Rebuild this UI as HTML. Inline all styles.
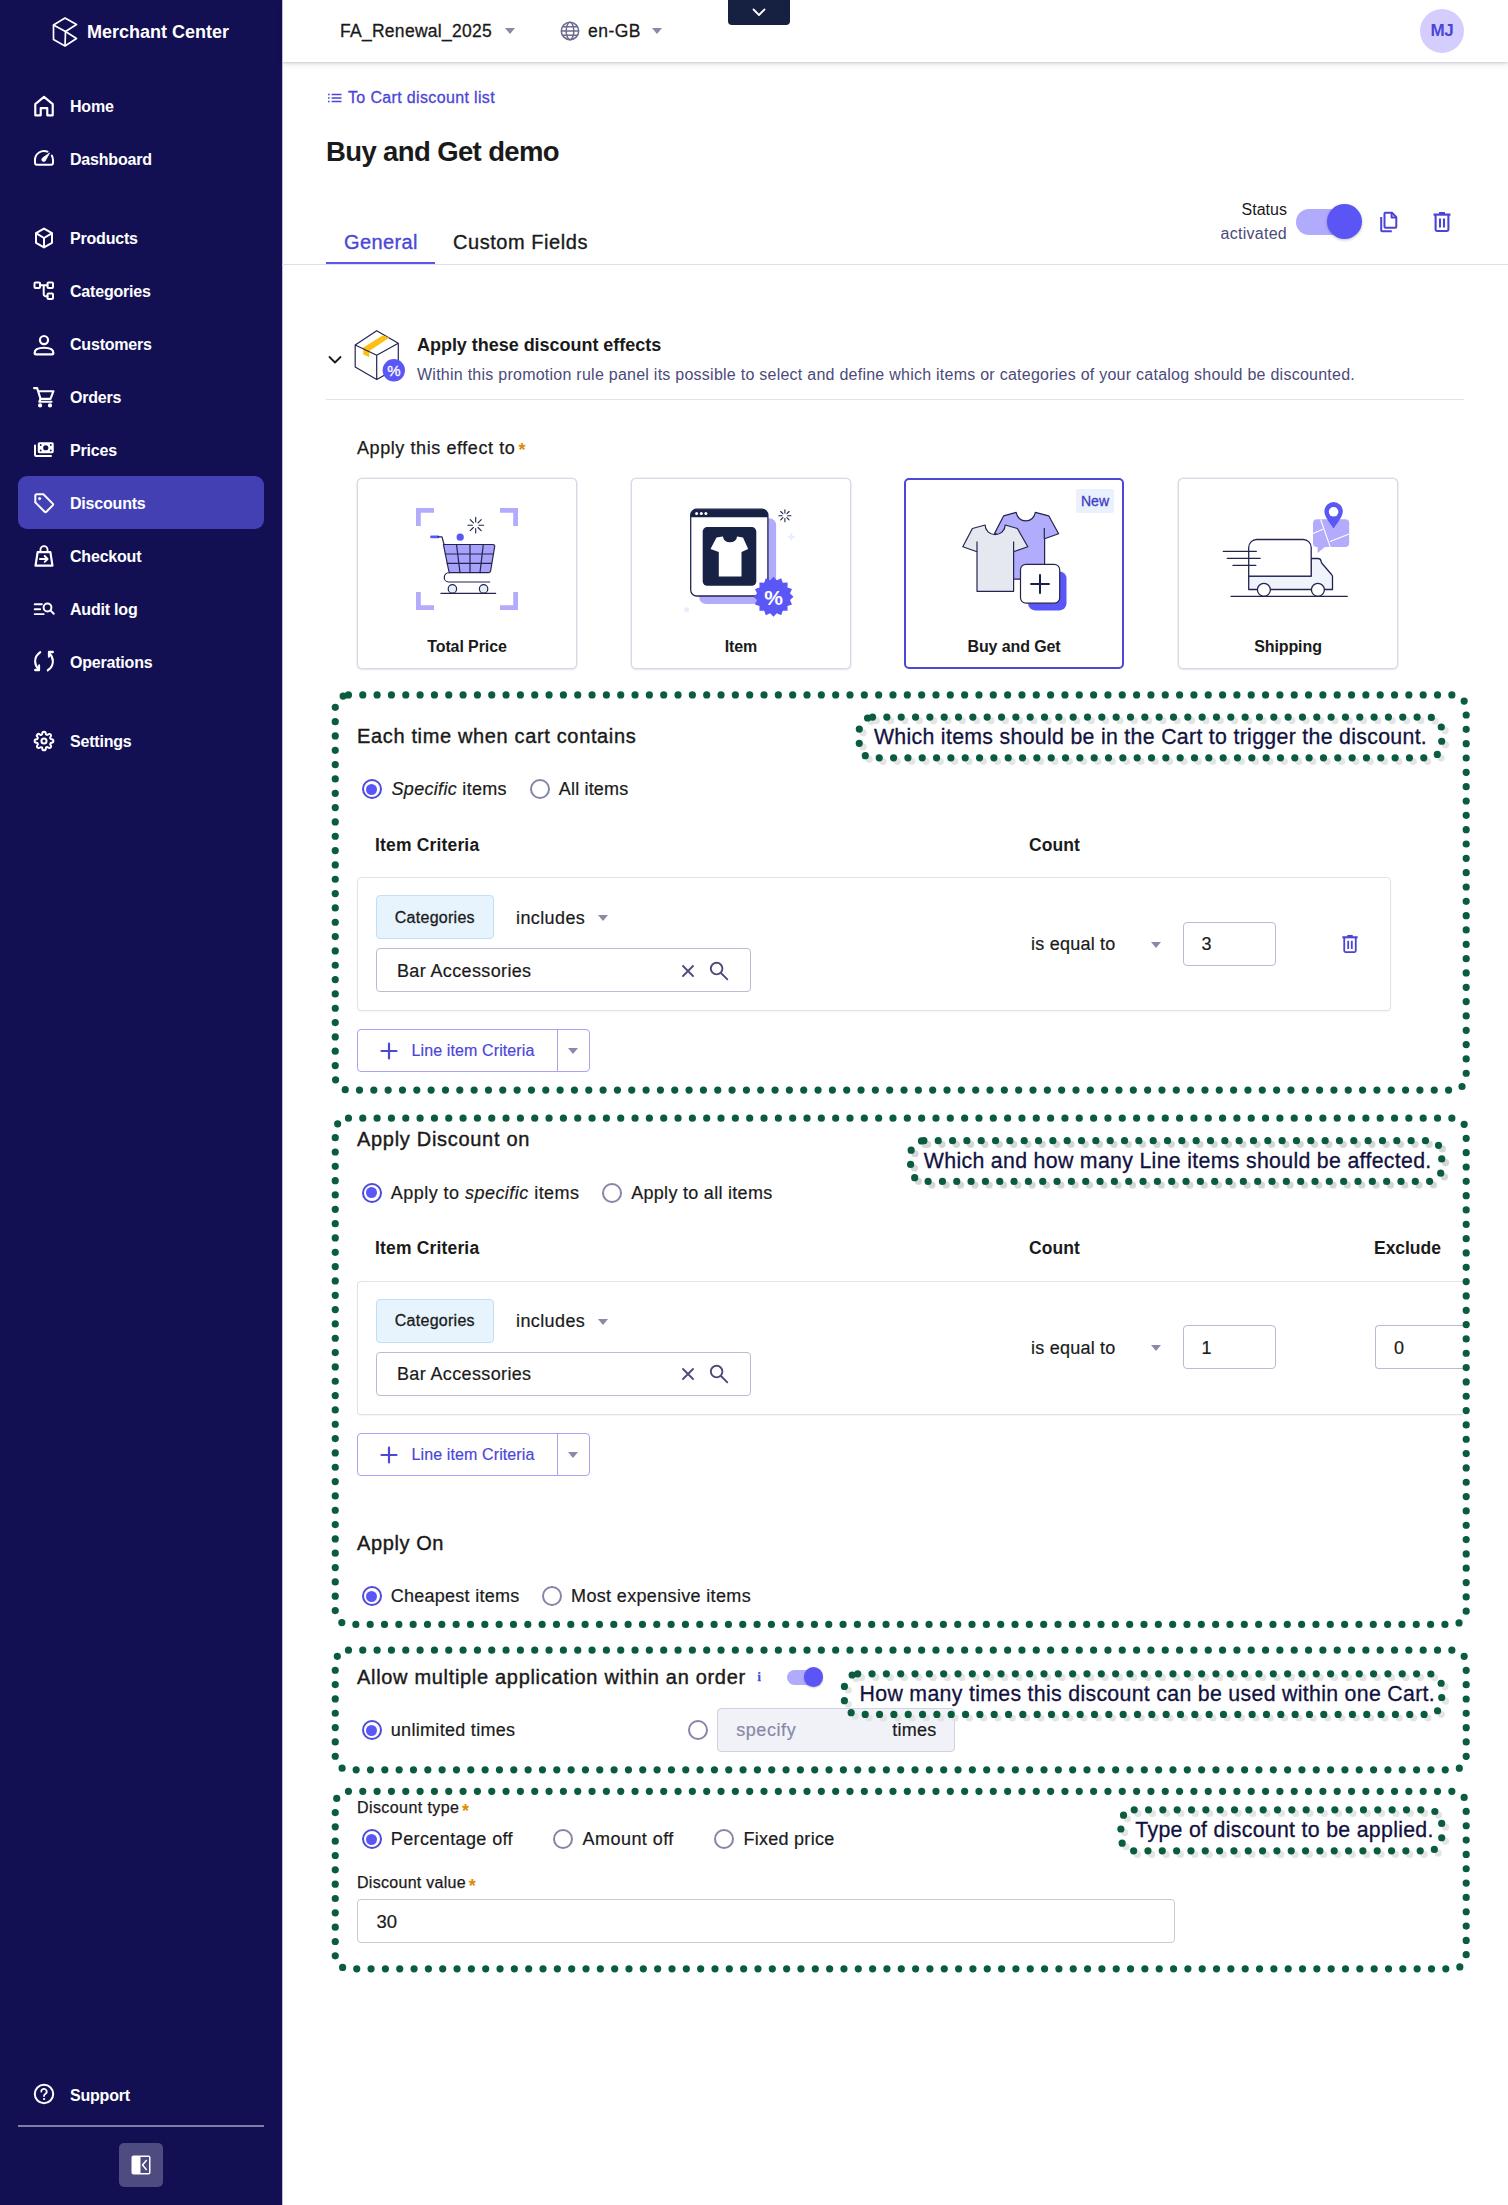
<!DOCTYPE html>
<html lang="en">
<head>
<meta charset="utf-8">
<title>Buy and Get demo - Merchant Center</title>
<style>
*{box-sizing:border-box;margin:0;padding:0}
html,body{width:1508px;height:2205px;overflow:hidden;background:#fff}
body{position:relative;font-family:"Liberation Sans",Arial,sans-serif;color:#1a1a1a;font-size:16px}
.a{position:absolute}
.t{position:absolute;white-space:nowrap;line-height:24px;height:24px}
.b{font-weight:700}
svg{display:block;overflow:visible}
/* sidebar */
#side{position:absolute;left:0;top:0;width:282px;height:2205px;background:#120f52}
#side .nv{position:absolute;left:70px;color:#fff;font-weight:700;font-size:16px;letter-spacing:-.2px;line-height:24px;height:24px;white-space:nowrap}
#side .ic{position:absolute;left:32px;width:24px;height:24px}
#side .ic svg{width:24px;height:24px;fill:none;stroke:#fff;stroke-width:2;stroke-linecap:round;stroke-linejoin:round}
#act{position:absolute;left:18px;top:476.300px;width:246px;height:53px;border-radius:9px;background:#4340b4}
/* header */
#hdr{position:absolute;left:282px;top:0;width:1226px;height:62px;background:#fff;box-shadow:0 1px 2px rgba(30,30,70,.16),0 3px 6px rgba(30,30,70,.09)}

.caret{position:absolute;width:0;height:0;border-left:5.5px solid transparent;border-right:5.5px solid transparent;border-top:6px solid #8a89a8}
.lnk{color:#4b46d8}
.sub{color:#4c4a7a}
.ast{color:#e08a00}
/* cards */
.card{position:absolute;top:478px;width:220px;height:191px;border:1px solid #d7d9e5;border-radius:5px;background:#fff;box-shadow:0 0 0 .5px #e3e5ee,0 1px 2px rgba(50,60,100,.13)}
.card.sel{border:2px solid #4b48d8;box-shadow:none}
.card .lb{position:absolute;left:0;right:0;top:156px;text-align:center;font-weight:700;font-size:16px;line-height:24px;letter-spacing:-.1px}
.card.sel .lb{top:155px}
/* radios */
.rd{position:absolute;width:20px;height:20px;border-radius:50%;border:2px solid #8685a8;background:#fff}
.rd.on{border-color:#4f4ad9}
.rd.on::after{content:"";position:absolute;left:2.500px;top:2.500px;width:11px;height:11px;border-radius:50%;background:#5b57f6}
.inp{position:absolute;border:1px solid #babbd2;border-radius:4px;background:#fff}
.box{position:absolute;border:1px solid #e1e2ec;border-radius:4px;background:#fff;box-shadow:0 1px 2px rgba(60,60,100,.06)}
.chip{position:absolute;border:1px solid #bfe0f7;border-radius:4px;background:#e7f3fd}
.btn{position:absolute;border:1px solid #a8a4f3;border-radius:4px;background:#fff}

.h2{font-size:20px;-webkit-text-stroke:.4px #1a1a1a}
.r17{font-size:18px;-webkit-text-stroke:.2px currentColor}
.ttl17{font-size:17.5px;font-weight:700}
.note{position:absolute;white-space:nowrap;font-size:21.3px;line-height:28px;height:28px;color:#12123f;-webkit-text-stroke:.3px #12123f}
</style>
</head>
<body>

<!-- ============ SIDEBAR ============ -->
<div id="side">
  <div class="a" id="logo" style="left:51px;top:16px;width:28px;height:32px">
    <svg viewBox="0 0 28 32" width="28" height="32" fill="none" stroke="#fff" stroke-width="1.7" stroke-linejoin="round"><path d="M14 2 L25.5 8.5 L14.5 15.5 L25.5 22.5 L14 30 L2.5 23.5 L2.5 9 Z"/><path d="M2.5 9 L14.5 15.5 L14 30"/></svg>
  </div>
  <div class="t b" id="mc" style="left:87px;top:20px;color:#fff;font-size:18px">Merchant Center</div>

  <div id="act"></div>

  <div class="ic" style="top:93.9px"><svg viewBox="0 0 24 24"><g transform="translate(12 12) scale(1.09) translate(-12 -12)"><path d="M4 20.6V10.2L12 3.6l8 6.6v10.4h-5V14H9v6.6z"/></g></svg></div><div class="nv" style="top:95px">Home</div>
  <div class="ic" style="top:146.3px"><svg viewBox="0 0 24 24"><path d="M15.5 5.7A9 9 0 0 0 3 14v2.8a2 2 0 0 0 2 2h14a2 2 0 0 0 2-2V14a9 9 0 0 0-1.2-4.5"/><path d="M17.400 7.300l-3.700 6.600a2 2 0 1 1-3-2.100z" fill="#fff" stroke-width=".8"/></svg></div><div class="nv" style="top:148px">Dashboard</div>
  <div class="ic" style="top:226.1px"><svg viewBox="0 0 24 24"><path d="M12 2.6l8 4.6v9.600l-8 4.600-8-4.600V7.200z"/><path d="M4.300 7.400L12 12l7.700-4.600M12 12v9"/></svg></div><div class="nv" style="top:227px">Products</div>
  <div class="ic" style="top:279.4px"><svg viewBox="0 0 24 24"><rect x="2.500" y="3.500" width="5.500" height="5.500" rx="1"/><rect x="15.500" y="3.500" width="5.500" height="5.500" rx="1"/><rect x="15.500" y="14.500" width="5.500" height="5.500" rx="1"/><path d="M8 6.200h7.500M11.700 6.200v9a2 2 0 0 0 2 2h1.800"/></svg></div><div class="nv" style="top:280px">Categories</div>
  <div class="ic" style="top:332.8px"><svg viewBox="0 0 24 24"><g transform="translate(12 12) scale(1.1) translate(-12 -12)"><circle cx="12" cy="7.500" r="3.700"/><path d="M3.500 19.200c0-3 3.500-4.700 8.500-4.700s8.500 1.700 8.500 4.700v.300a1 1 0 0 1-1 1h-15a1 1 0 0 1-1-1z"/></g></svg></div><div class="nv" style="top:333px">Customers</div>
  <div class="ic" style="top:385.0px"><svg viewBox="0 0 24 24"><g transform="translate(12 12) scale(1.05) translate(-12 -12)"><path d="M2.500 3.500h3l3.200 10.300h9.500L21 6.500H7.500" /><path d="M8.700 13.800l-1.200 2.700h11.700"/><circle cx="8.300" cy="20" r="1.300" fill="#fff" stroke-width="1.400"/><circle cx="17.700" cy="20" r="1.300" fill="#fff" stroke-width="1.400"/></g></svg></div><div class="nv" style="top:386px">Orders</div>
  <div class="ic" style="top:438.3px"><svg viewBox="0 0 24 24"><rect x="6.500" y="5" width="14.500" height="9.500" rx="1" fill="#fff" stroke-width="1.500"/><circle cx="13.750" cy="9.750" r="2.600" fill="#120f52" stroke="none"/><circle cx="8.700" cy="7" r=".9" fill="#120f52" stroke="none"/><circle cx="18.800" cy="7" r=".9" fill="#120f52" stroke="none"/><circle cx="8.700" cy="12.500" r=".9" fill="#120f52" stroke="none"/><circle cx="18.800" cy="12.500" r=".9" fill="#120f52" stroke="none"/><path d="M3 7.500v9.200a1.300 1.300 0 0 0 1.300 1.300H19"/></svg></div><div class="nv" style="top:439px">Prices</div>
  <div class="ic" style="top:490.7px"><svg viewBox="0 0 24 24"><path d="M3.300 4.600a1.300 1.300 0 0 1 1.300-1.300h6.800l9.300 9.300a1.300 1.300 0 0 1 0 1.800l-6.300 6.300a1.300 1.300 0 0 1-1.800 0L3.300 11.400z"/><circle cx="7.600" cy="7.600" r="1.100" fill="#fff" stroke-width="1"/></svg></div><div class="nv" style="top:492px">Discounts</div>
  <div class="ic" style="top:543.7px"><svg viewBox="0 0 24 24"><g transform="translate(12 12) scale(1.1) translate(-12 -12)"><path d="M6.200 8.500h11.600l1.900 12.300H4.300z"/><path d="M8.800 8.300V6.200a3.200 3.200 0 0 1 6.400 0v2.100" stroke-width="1.700"/><path d="M8.300 14.700h6.700M12.600 12l2.700 2.700-2.700 2.700" stroke-width="1.700"/></g></svg></div><div class="nv" style="top:545px">Checkout</div>
  <div class="ic" style="top:596.9px"><svg viewBox="0 0 24 24"><path d="M2.700 7.300h7.200M2.700 12.200h5.500M2.700 17.100h9" stroke-width="1.900"/><circle cx="15.500" cy="10.500" r="3.900"/><path d="M18.400 13.400l3.400 3.400"/></svg></div><div class="nv" style="top:598px">Audit log</div>
  <div class="ic" style="top:649.0px"><svg viewBox="0 0 24 24"><g transform="translate(12 12) scale(1.02 1.17) translate(-12 -12)"><path d="M8.300 4.500C5.300 6.300 3.300 9 3.300 12.300c0 2.600 1.200 4.900 3.400 6.700"/><path d="M3.300 19.700h3.900v-3.900" /><path d="M15.700 20c3-1.800 5-4.500 5-7.800 0-2.600-1.200-4.900-3.400-6.700" /><path d="M20.700 4.300h-3.900v3.900"/></g></svg></div><div class="nv" style="top:651px">Operations</div>
  <div class="ic" style="top:729.1px"><svg viewBox="0 0 24 24"><g transform="translate(12 12) scale(0.85) translate(-12 -12)" stroke-width="2.35"><circle cx="12" cy="12" r="3"/><path d="M19.400 15a1.650 1.650 0 0 0 .33 1.820l.06.06a2 2 0 1 1-2.830 2.830l-.06-.06a1.650 1.650 0 0 0-1.820-.33 1.650 1.650 0 0 0-1 1.510V21a2 2 0 1 1-4 0v-.09A1.650 1.650 0 0 0 9 19.400a1.650 1.650 0 0 0-1.820.33l-.06.06a2 2 0 1 1-2.830-2.830l.06-.06a1.650 1.650 0 0 0 .33-1.820 1.650 1.650 0 0 0-1.510-1H3a2 2 0 1 1 0-4h.09A1.650 1.650 0 0 0 4.600 9a1.650 1.650 0 0 0-.33-1.820l-.06-.06a2 2 0 1 1 2.830-2.830l.06.06a1.650 1.650 0 0 0 1.820.33H9a1.650 1.650 0 0 0 1-1.510V3a2 2 0 1 1 4 0v.09a1.650 1.650 0 0 0 1 1.510 1.650 1.650 0 0 0 1.820-.33l.06-.06a2 2 0 1 1 2.830 2.830l-.06.06a1.650 1.650 0 0 0-.33 1.820V9a1.650 1.650 0 0 0 1.510 1H21a2 2 0 1 1 0 4h-.09a1.650 1.650 0 0 0-1.510 1z"/></g></svg></div><div class="nv" style="top:730px">Settings</div>
  <div class="ic" style="top:2082.4px"><svg viewBox="0 0 24 24"><circle cx="12" cy="12" r="9.200"/><path d="M9.300 9.600a2.700 2.700 0 1 1 3.900 2.400c-.8.500-1.200 1-1.200 2" stroke-width="1.800"/><circle cx="12" cy="17" r=".6" fill="#fff" stroke-width="1"/></svg></div><div class="nv" style="top:2084px">Support</div>

  <div class="a" style="left:18px;top:2125px;width:246px;height:2px;background:#7f7da8"></div>
  <div class="a" id="collapse" style="left:119px;top:2143px;width:44px;height:44px;border-radius:5px;background:#4d4b80"><svg viewBox="0 0 44 44" width="44" height="44"><rect x="12.500" y="12.500" width="19" height="19" rx="2" fill="#fff"/><rect x="21.500" y="14" width="8.500" height="16" fill="#4d4b80"/><path d="M27.300 17.500l-3.800 4.500 3.800 4.500" fill="none" stroke="#fff" stroke-width="1.500" stroke-linecap="round" stroke-linejoin="round"/></svg></div>
</div>

<!-- ============ HEADER ============ -->
<div id="hdr">
  <div class="t" id="proj" style="left:58px;top:19px;font-size:17.5px;-webkit-text-stroke:.3px #1a1a1a;letter-spacing:0.274px">FA_Renewal_2025</div>
  <div class="caret" style="left:223px;top:28px"></div>
  <div class="a" style="left:277px;top:20px;width:22px;height:22px"><svg viewBox="0 0 22 22" width="22" height="22" fill="none" stroke="#6c6b8e" stroke-width="1.500"><circle cx="11" cy="11" r="8.700"/><ellipse cx="11" cy="11" rx="3.800" ry="8.700"/><path d="M2.300 11h17.400M3.500 6.700h15M3.500 15.300h15"/></svg></div>
  <div class="t" id="loc" style="left:306px;top:19px;font-size:17.5px;-webkit-text-stroke:.3px #1a1a1a;letter-spacing:0.484px">en-GB</div>
  <div class="caret" style="left:370px;top:28px"></div>
  <div class="a" style="left:446px;top:0;width:62px;height:25px;background:#162040;border-radius:0 0 4px 4px"><svg viewBox="0 0 62 25" width="62" height="25" fill="none" stroke="#fff" stroke-width="1.800" stroke-linecap="round" stroke-linejoin="round"><path d="M25.500 9.500l5.500 5.500 5.500-5.500"/></svg></div>
  <div class="a" style="left:1138px;top:9px;width:44px;height:44px;border-radius:50%;background:#d3cefd"></div>
  <div class="t b" id="mj" style="left:1138px;top:19px;width:44px;text-align:center;font-size:17px;color:#4b45d8;letter-spacing:-.3px">MJ</div>
</div>

<div class="a" style="left:282px;top:0;width:1px;height:2205px;background:#bdbbdc"></div>
<!-- ============ MAIN ============ -->
<div id="main">
  <!-- breadcrumb -->
  <div class="a" style="left:328px;top:92px;width:14px;height:12px"><svg viewBox="0 0 14 12" width="14" height="12" fill="none" stroke="#4b46d8" stroke-width="1.300"><path d="M0 2.500h1.600M3.600 2.500H13.500M0 6h1.600M3.600 6H13.500M0 9.500h1.600M3.600 9.500H13.500"/></svg></div>
  <div class="t lnk" id="bc" style="left:348px;top:86px;-webkit-text-stroke:.3px #4b46d8;font-size:16px;letter-spacing:0.352px">To Cart discount list</div>
  <div class="t b" id="ttl" style="left:326px;top:134px;height:36px;line-height:36px;font-size:27.5px;letter-spacing:-0.622px">Buy and Get demo</div>
  <!-- tabs -->
  <div class="t lnk" id="tab1" style="left:344px;top:230px;font-size:20px;color:#4b48d6;-webkit-text-stroke:.35px #4b48d6;letter-spacing:0.363px">General</div>
  <div class="t" id="tab2" style="left:453px;top:230px;font-size:20px;-webkit-text-stroke:.35px #1a1a1a;letter-spacing:0.553px">Custom Fields</div>
  <div class="a" style="left:282px;top:264px;width:1226px;height:1px;background:#dfdfec"></div>
  <div class="a" style="left:326px;top:261.500px;width:109px;height:2.500px;background:#5957ee"></div>
  <!-- status -->
  <div class="t" id="st1" style="left:1187px;width:100px;text-align:right;top:198px;font-size:16px;letter-spacing:0.023px">Status</div>
  <div class="t sub" id="st2" style="left:1187px;width:100px;text-align:right;top:222px;font-size:16px;letter-spacing:0.273px">activated</div>
  <div class="a" style="left:1296px;top:209px;width:62px;height:26px;border-radius:13px;background:#b1abfd"></div>
  <div class="a" style="left:1327px;top:204px;width:35px;height:35px;border-radius:50%;background:#5b55f6;box-shadow:0 1px 3px rgba(0,0,0,.25)"></div>
  <div class="a" id="copy" style="left:1379px;top:210px;width:20px;height:23px"><svg viewBox="0 0 20 23" width="20" height="23" fill="none" stroke="#4b42d8" stroke-width="2" stroke-linejoin="round"><path d="M6 2.800h7l4.300 4.300v9.700a1 1 0 0 1-1 1H6.500a1 1 0 0 1-1-1V3.800a1 1 0 0 1 .5-1z"/><path d="M12.600 2.800v4.600h4.700" /><path d="M2.200 7v13.200a1 1 0 0 0 1 1h9.600"/></svg></div>
  <div class="a" id="trash1" style="left:1432px;top:210px;width:20px;height:23px"><svg viewBox="0 0 20 23" width="20" height="23" fill="none" stroke="#4b42d8" stroke-width="2.100"><path d="M1.500 4.600h17" stroke-width="2.200"/><path d="M7 3.200h6" stroke-width="2.400"/><path d="M3.600 5v14.600a1.400 1.400 0 0 0 1.400 1.400h10a1.400 1.400 0 0 0 1.400-1.400V5"/><path d="M8 8.500v9M12 8.500v9"/></svg></div>

  <!-- panel header -->
  <div class="a" style="left:328px;top:354px;width:14px;height:12px"><svg viewBox="0 0 14 12" width="14" height="12" fill="none" stroke="#1a1a1a" stroke-width="1.800" stroke-linecap="round" stroke-linejoin="round"><path d="M1.500 3l5.500 5.500L12.500 3"/></svg></div>
  <div class="a" id="boxicon" style="left:354px;top:330px;width:52px;height:53px"></div>
  <div class="t b" id="ph1" style="left:417px;top:333px;font-size:18px;letter-spacing:-0.031px">Apply these discount effects</div>
  <div class="t sub" id="ph2" style="left:417px;top:363px;font-size:16px;letter-spacing:0.251px">Within this promotion rule panel its possible to select and define which items or categories of your catalog should be discounted.</div>
  <div class="a" style="left:326px;top:399px;width:1138px;height:1px;background:#e2e2ea"></div>

  <div class="t" id="ate" style="left:357px;top:436px;-webkit-text-stroke:.25px #1a1a1a;font-size:18px;letter-spacing:0.577px">Apply this effect to</div><div class="t ast b" style="left:518.500px;top:438.400px;font-size:18px">*</div>

  <div class="card" style="left:357px"><div class="lb">Total Price</div></div>
  <div class="card" style="left:631px"><div class="lb">Item</div></div>
  <div class="card sel" style="left:904px"><div class="lb">Buy and Get</div>
    <div class="a" style="left:170px;top:9px;width:38px;height:24px;background:#e8f1fc;border-radius:2px;color:#403cc4;font-size:14px;line-height:24px;text-align:center;-webkit-text-stroke:.3px #403cc4">New</div>
  </div>
  <div class="card" style="left:1178px"><div class="lb">Shipping</div></div>
</div>
<div id="form">
  <!-- section 1 -->
  <div class="t h2" id="h1" style="left:357px;top:723.500px;letter-spacing:0.648px">Each time when cart contains</div>
  <div class="rd on" style="left:361.500px;top:779px"></div>
  <div class="t r17" id="r1a" style="left:391.500px;top:777px;letter-spacing:0.311px"><i>Specific</i> items</div>
  <div class="rd" style="left:529.700px;top:779px"></div>
  <div class="t r17" id="r1b" style="left:558.800px;top:777px;letter-spacing:0.176px">All items</div>
  <div class="t ttl17" id="aic" style="left:375px;top:832.5px;letter-spacing:0.167px">Item Criteria</div>
  <div class="t ttl17" id="acn" style="left:1029px;top:832.5px;letter-spacing:0.091px">Count</div>
  <div class="box" style="left:357px;top:877px;width:1034px;height:134px"></div>
  <div class="chip" style="left:376px;top:895px;width:118px;height:44px"></div>
  <div class="t" id="ach" style="left:394.800px;top:905.5px;font-size:16px;-webkit-text-stroke:.3px #1a1a1a;letter-spacing:0.263px">Categories</div>
  <div class="t r17" id="ain" style="left:516px;top:905.5px;letter-spacing:0.394px">includes</div>
  <div class="caret" style="left:598px;top:915px"></div>
  <div class="inp" style="left:376px;top:948px;width:375px;height:44px"></div>
  <div class="t r17" id="aba" style="left:397px;top:958.5px;letter-spacing:0.362px">Bar Accessories</div>
  <svg class="a" style="left:681px;top:963.5px" width="14" height="14" viewBox="0 0 14 14" fill="none" stroke="#4c4a7a" stroke-width="1.800" stroke-linecap="round"><path d="M2 2l10 10M12 2L2 12"/></svg>
  <svg class="a" style="left:708px;top:959.5px" width="22" height="22" viewBox="0 0 22 22" fill="none" stroke="#4c4a7a" stroke-width="1.900" stroke-linecap="round"><circle cx="8.600" cy="8.600" r="5.800"/><path d="M13 13l6.300 6.300"/></svg>
  <div class="t r17" id="aeq" style="left:1031px;top:932px;letter-spacing:0.231px">is equal to</div>
  <div class="caret" style="left:1150.500px;top:941.5px"></div>
  <div class="inp" style="left:1183px;top:922px;width:92.500px;height:44px"></div>
  <div class="t r17" style="left:1201.500px;top:932px">3</div>
  <svg class="a" style="left:1341px;top:933px" width="18" height="21" viewBox="0 0 20 23" fill="none" stroke="#4b42d8" stroke-width="2"><path d="M1.500 4.600h17" stroke-width="2.300"/><path d="M7 3.200h6" stroke-width="2.400"/><path d="M3.600 5v14.600a1.400 1.400 0 0 0 1.400 1.400h10a1.400 1.400 0 0 0 1.400-1.400V5"/><path d="M8 8.500v9M12 8.500v9"/></svg>
  <div class="btn" style="left:357px;top:1029px;width:232.500px;height:43px"></div>
  <div class="a" style="left:556.500px;top:1029px;width:1px;height:43px;background:#a8a4f3"></div>
  <svg class="a" style="left:380px;top:1042px" width="18" height="18" viewBox="0 0 18 18" fill="none" stroke="#4b48d6" stroke-width="2.200" stroke-linecap="round"><path d="M9 1.500v15M1.500 9h15"/></svg>
  <div class="t lnk" id="abt" style="-webkit-text-stroke:.2px #4b46d8;left:411.500px;top:1039px;font-size:16px;letter-spacing:0.115px">Line item Criteria</div>
  <div class="caret" style="left:567.500px;top:1048px"></div>
  <!-- section 2 -->
  <div class="t h2" id="h2" style="left:357px;top:1127.0px;letter-spacing:0.700px">Apply Discount on</div>
  <div class="rd on" style="left:361.500px;top:1182.5px"></div>
  <div class="t r17" id="r2a" style="left:390.800px;top:1180.5px;letter-spacing:0.461px">Apply to <i>specific</i> items</div>
  <div class="rd" style="left:601.700px;top:1182.5px"></div>
  <div class="t r17" id="r2b" style="left:631.200px;top:1180.5px;letter-spacing:0.291px">Apply to all items</div>
  <div class="t ttl17" id="bic" style="left:375px;top:1236.0px;letter-spacing:0.167px">Item Criteria</div>
  <div class="t ttl17" id="bcn" style="left:1029px;top:1236.0px;letter-spacing:0.091px">Count</div>
  <div class="t ttl17" id="bex" style="left:1374px;top:1236.0px;letter-spacing:-0.032px">Exclude</div>
  <div class="box" style="left:357px;top:1281px;width:1106px;height:134px;border-right:none;border-radius:4px 0 0 4px"></div>
  <div class="chip" style="left:376px;top:1299px;width:118px;height:44px"></div>
  <div class="t" id="bch" style="left:394.800px;top:1309.0px;font-size:16px;-webkit-text-stroke:.3px #1a1a1a;letter-spacing:0.263px">Categories</div>
  <div class="t r17" id="bin" style="left:516px;top:1309.0px;letter-spacing:0.394px">includes</div>
  <div class="caret" style="left:598px;top:1318.5px"></div>
  <div class="inp" style="left:376px;top:1352.0px;width:375px;height:44px"></div>
  <div class="t r17" id="bba" style="left:397px;top:1362.0px;letter-spacing:0.362px">Bar Accessories</div>
  <svg class="a" style="left:681px;top:1367.0px" width="14" height="14" viewBox="0 0 14 14" fill="none" stroke="#4c4a7a" stroke-width="1.800" stroke-linecap="round"><path d="M2 2l10 10M12 2L2 12"/></svg>
  <svg class="a" style="left:708px;top:1363.0px" width="22" height="22" viewBox="0 0 22 22" fill="none" stroke="#4c4a7a" stroke-width="1.900" stroke-linecap="round"><circle cx="8.600" cy="8.600" r="5.800"/><path d="M13 13l6.300 6.300"/></svg>
  <div class="t r17" id="beq" style="left:1031px;top:1335.5px;letter-spacing:0.231px">is equal to</div>
  <div class="caret" style="left:1150.500px;top:1345.0px"></div>
  <div class="inp" style="left:1183px;top:1325px;width:92.500px;height:44px"></div>
  <div class="t r17" style="left:1201.500px;top:1335.5px">1</div>
  <div class="inp" style="left:1375px;top:1325px;width:88px;height:44px;border-right:none;border-radius:4px 0 0 4px"></div>
  <div class="t r17" style="left:1394px;top:1335.5px">0</div>
  <div class="btn" style="left:357px;top:1433.0px;width:232.500px;height:43px"></div>
  <div class="a" style="left:556.500px;top:1433.0px;width:1px;height:43px;background:#a8a4f3"></div>
  <svg class="a" style="left:380px;top:1445.5px" width="18" height="18" viewBox="0 0 18 18" fill="none" stroke="#4b48d6" stroke-width="2.200" stroke-linecap="round"><path d="M9 1.500v15M1.500 9h15"/></svg>
  <div class="t lnk" id="bbt" style="-webkit-text-stroke:.2px #4b46d8;left:411.500px;top:1442.5px;font-size:16px;letter-spacing:0.115px">Line item Criteria</div>
  <div class="caret" style="left:567.500px;top:1451.5px"></div>
  <!-- apply on -->
  <div class="t h2" id="h3" style="left:357px;top:1530.500px;letter-spacing:0.604px">Apply On</div>
  <div class="rd on" style="left:361.500px;top:1586.300px"></div>
  <div class="t r17" id="r3a" style="left:390.800px;top:1584.300px;letter-spacing:0.253px">Cheapest items</div>
  <div class="rd" style="left:541.600px;top:1586.300px"></div>
  <div class="t r17" id="r3b" style="left:571.100px;top:1584.300px;letter-spacing:0.341px">Most expensive items</div>
  <!-- section 3 -->
  <div class="t h2" id="h4" style="left:357px;top:1665px;letter-spacing:0.681px">Allow multiple application within an order</div>
  <div class="t b" style="left:757.500px;top:1665px;font-size:12px;font-family:'Liberation Serif',serif;color:#4b48d6;-webkit-text-stroke:.3px #4b48d6">i</div>
  <div class="a" style="left:786.500px;top:1669.500px;width:34px;height:15px;border-radius:8px;background:#b1abfd"></div>
  <div class="a" style="left:803.500px;top:1667.200px;width:19.500px;height:19.500px;border-radius:50%;background:#5b55f6;box-shadow:0 1px 2px rgba(0,0,0,.2)"></div>
  <div class="rd on" style="left:361.500px;top:1720px"></div>
  <div class="t r17" id="r4a" style="left:390.800px;top:1718px;letter-spacing:0.304px">unlimited times</div>
  <div class="rd" style="left:688.100px;top:1720px"></div>
  <div class="inp" style="left:717px;top:1707.700px;width:237.500px;height:44px;background:#f1f2f7;border-color:#cfd0e0"></div>
  <div class="t r17" id="sp" style="left:736.200px;top:1718px;color:#8988a8;letter-spacing:0.581px">specify</div>
  <div class="t r17" id="tm" style="left:892.200px;top:1717.500px;letter-spacing:0.237px">times</div>
  <!-- section 4 -->
  <div class="t" id="dt" style="left:357px;top:1796.200px;font-size:16px;-webkit-text-stroke:.25px #1a1a1a;letter-spacing:0.412px">Discount type</div><div class="t ast b" style="left:462px;top:1799px;font-size:18px">*</div>
  <div class="rd on" style="left:361.500px;top:1829.200px"></div>
  <div class="t r17" id="r5a" style="left:390.800px;top:1827.200px;letter-spacing:0.388px">Percentage off</div>
  <div class="rd" style="left:553.200px;top:1829.200px"></div>
  <div class="t r17" id="r5b" style="left:582.600px;top:1827.200px;letter-spacing:0.447px">Amount off</div>
  <div class="rd" style="left:714.300px;top:1829.200px"></div>
  <div class="t r17" id="r5c" style="left:743.400px;top:1827.200px;letter-spacing:0.279px">Fixed price</div>
  <div class="t" id="dv" style="left:357px;top:1871px;font-size:16px;-webkit-text-stroke:.25px #1a1a1a;letter-spacing:0.289px">Discount value</div><div class="t ast b" style="left:468.700px;top:1873.800px;font-size:18px">*</div>
  <div class="inp" style="left:357px;top:1899.300px;width:818px;height:43.500px;border-color:#c9cad9"></div>
  <div class="t r17" id="v30" style="left:376.500px;top:1910px;font-size:18.500px;letter-spacing:0px">30</div>
  <!-- annotations -->
  <div class="note" id="n1" style="left:873.900px;top:723px;letter-spacing:0.313px">Which items should be in the Cart to trigger the discount.</div>
  <div class="note" id="n2" style="left:923.850px;top:1147px;letter-spacing:0.320px">Which and how many Line items should be affected.</div>
  <div class="note" id="n3" style="left:859.600px;top:1679.500px;letter-spacing:0.314px">How many times this discount can be used within one Cart.</div>
  <div class="note" id="n4" style="left:1135.300px;top:1815.800px;letter-spacing:0.308px">Type of discount to be applied.</div>
</div>
<svg id="dots" class="a" style="left:0;top:0;pointer-events:none" width="1508" height="2205" viewBox="0 0 1508 2205" fill="none" stroke-width="7.200" stroke-linecap="round" stroke-dasharray="0 14.330">
<rect x="335.25" y="694.9" width="1130.95" height="395.2" rx="13.2" ry="13.2" stroke="#0a5c3c"/>
<rect x="335.25" y="1118.2" width="1130.95" height="506.2" rx="13.2" ry="13.2" stroke="#0a5c3c"/>
<rect x="335.25" y="1650.2" width="1130.95" height="119.6" rx="13.2" ry="13.2" stroke="#0a5c3c"/>
<rect x="335.25" y="1791.3" width="1130.95" height="177.5" rx="13.2" ry="13.2" stroke="#0a5c3c"/>
<rect x="859.25" y="717.05" width="582.45" height="40.8" rx="13.3" ry="13.3" transform="translate(3.8 3.600)" stroke="#e3e4e5"/><rect x="859.25" y="717.05" width="582.45" height="40.8" rx="13.3" ry="13.3" stroke="#0a5c3c"/>
<rect x="910.6" y="1140.7" width="531.1" height="40.7" rx="13.3" ry="13.3" transform="translate(3.8 3.600)" stroke="#d3d6da"/><rect x="910.6" y="1140.7" width="531.1" height="40.7" rx="13.3" ry="13.3" stroke="#0a5c3c"/>
<rect x="844.4" y="1673.8" width="597.3" height="40.6" rx="13.3" ry="13.3" transform="translate(3.8 3.600)" stroke="#e3e4e5"/><rect x="844.4" y="1673.8" width="597.3" height="40.6" rx="13.3" ry="13.3" stroke="#0a5c3c"/>
<rect x="1120.9" y="1809.85" width="320.8" height="40.95" rx="13.3" ry="13.3" transform="translate(3.8 3.600)" stroke="#e3e4e5"/><rect x="1120.9" y="1809.85" width="320.8" height="40.95" rx="13.3" ry="13.3" stroke="#0a5c3c"/>
</svg>
<svg id="art" class="a" style="left:0;top:0;pointer-events:none" width="1508" height="2205" viewBox="0 0 1508 2205" fill="none">
<g stroke="#23254f" stroke-width="1.2" stroke-linejoin="round"><path d="M376.700 330.700L398.300 343.300V367.500L376.700 379.500L355.200 366.900V345Z" fill="#fff"/><path d="M363.300 347.600L383.100 335.200L389.100 337.800L369.300 351V357L363.300 354.500Z" fill="#fcbf12" stroke="none"/><path d="M355.200 345L376.700 355.300L398.300 343.300M376.700 355.300V379.500"/></g><circle cx="393.800" cy="370.300" r="11.200" fill="#5b57f6"/><text x="393.800" y="375.700" text-anchor="middle" font-family="Liberation Sans, sans-serif" font-weight="400" font-size="15" fill="#fff" stroke="#fff" stroke-width=".3">%</text>
<path d="M418.400 526V510.400H434M500 510.400H515.600V526M515.600 592V607.600H500M434 607.600H418.400V592" stroke="#b3acfc" stroke-width="4.800"/><path d="M479.0 525.2L483.5 525.2M478.0 527.5L481.2 530.7M475.7 528.5L475.7 533.0M473.4 527.5L470.2 530.7M472.4 525.2L467.9 525.2M473.4 522.9L470.2 519.7M475.7 521.9L475.7 517.4M478.0 522.9L481.2 519.7" stroke="#1b2448" stroke-width="1.1" fill="none" stroke-linecap="round"/><circle cx="460.200" cy="537.200" r="3.600" fill="#5b57f6"/><path d="M431.500 536.900H438" stroke="#5b57f6" stroke-width="2.800" stroke-linecap="round"/><g stroke="#23254f" stroke-width="1.200" stroke-linejoin="round" stroke-linecap="round"><path d="M438 536.900H442L444.200 545"/><path d="M443.400 544.500H493A1.800 1.800 0 0 1 494.700 546.500L490.600 571A1.800 1.800 0 0 1 488.800 572.600H450.500A1.800 1.800 0 0 1 448.800 571Z" fill="#a9a2fb"/><path d="M456.500 544.500L460 572.600M470 544.500V572.600M483.300 544.500L480 572.600M445.300 554H493M447 563.300H491.500"/><path d="M449.500 572.800A4.600 4.600 0 0 0 448.300 582H489.700"/><circle cx="452.400" cy="588.900" r="4.200" fill="#e8f0fa"/><circle cx="483.600" cy="588.900" r="4.200" fill="#e8f0fa"/><path d="M440.900 593.300H495.700"/></g>
<rect x="699.100" y="518.200" width="77" height="85.800" rx="7" fill="#b1abfc"/><rect x="690.700" y="509.200" width="77.200" height="86.800" rx="6" fill="#fff" stroke="#23254f" stroke-width="1.300"/><path d="M690.700 517.200V515.200A6 6 0 0 1 696.700 509.200H761.900A6 6 0 0 1 767.900 515.200V517.200Z" fill="#182244"/><circle cx="696.600" cy="513.500" r="1.500" fill="#fff"/><circle cx="701.300" cy="513.500" r="1.500" fill="#fff"/><circle cx="705.900" cy="513.500" r="1.500" fill="#fff"/><rect x="702.700" y="527.100" width="53.600" height="58.700" rx="4.500" fill="#182244"/><path d="M723 536.600A6.800 5.600 0 0 0 737 536.600L743 537.500L748.200 549L741.500 552V576.600H718.800V552L710.500 549L716.500 537.500Z" fill="#fff"/><polygon points="773.5,576.7 776.8,580.2 781.2,578.2 782.8,582.7 787.6,582.6 787.5,587.4 792.0,589.0 790.0,593.4 793.5,596.7 790.0,600.0 792.0,604.4 787.5,606.0 787.6,610.8 782.8,610.7 781.2,615.2 776.8,613.2 773.5,616.7 770.2,613.2 765.8,615.2 764.2,610.7 759.4,610.8 759.5,606.0 755.0,604.4 757.0,600.0 753.5,596.7 757.0,593.4 755.0,589.0 759.5,587.4 759.4,582.6 764.2,582.7 765.8,578.2 770.2,580.2" fill="#5b57f6"/><text x="773.500" y="604.500" text-anchor="middle" font-family="Liberation Sans, sans-serif" font-weight="700" font-size="21" fill="#fff">%</text><path d="M787.7 515.7L790.9 515.7M786.9 517.7L789.1 519.9M784.9 518.5L784.9 521.7M782.9 517.7L780.7 519.9M782.1 515.7L778.9 515.7M782.9 513.7L780.7 511.5M784.9 512.9L784.9 509.7M786.9 513.7L789.1 511.5" stroke="#1b2448" stroke-width="1.1" fill="none" stroke-linecap="round"/><path d="M791.300 532.500L792.600 535.600L795.800 536.900L792.600 538.200L791.300 541.300L790 538.200L786.800 536.900L790 535.600Z" fill="#e4f0fb"/><circle cx="686.700" cy="609.800" r="2.500" fill="#e4f0fb"/>
<g stroke="#23254f" stroke-width="1.200" stroke-linejoin="round"><path d="M1016.200 512.300A9.600 9.600 0 0 0 1035.300 512.300L1048.700 515.800L1058.600 533.700L1044.600 538.700V579.100H1007V538.700L994.600 533.400L1003.700 515.800Z" fill="#b2acfd"/><path d="M1044.300 538.700V528" /><path d="M985.100 525A10 9.600 0 0 0 1005.200 525L1017.400 528.500L1027.800 546.800L1013.600 551.700V591.300H977V551.700L962.800 546.800L972.400 528.500Z" fill="#e6e8ef"/><path d="M977 551.700V541.500M1013.600 551.700V541.500"/></g><rect x="1028.100" y="571.500" width="38.400" height="38.900" rx="7" fill="#5b57f6"/><rect x="1020.500" y="564.300" width="39.200" height="38.900" rx="5.500" fill="#fff" stroke="#23254f" stroke-width="1.200"/><path d="M1030.300 584H1049.700M1040 574.300V593.700" stroke="#16204a" stroke-width="2"/>
<rect x="1313" y="519.300" width="36.200" height="27.800" rx="4" fill="#b3acfc"/><path d="M1317.600 546.500V553L1325.500 546.500Z" fill="#b3acfc"/><path d="M1320.600 519.500L1330.300 547.100M1313 533.500L1323 529.300M1330 541.500L1349.200 534" stroke="#fff" stroke-width="1.100"/><path d="M1333.600 528.500C1329 522 1324.400 516.500 1324.400 511.300A9.200 9.200 0 0 1 1342.800 511.300C1342.800 516.500 1338.200 522 1333.600 528.500Z" fill="#5b57f6"/><circle cx="1333.600" cy="511.800" r="4.800" fill="#fff"/><g stroke="#23254f" stroke-width="1.300" stroke-linejoin="round" stroke-linecap="round"><path d="M1248.700 576.100H1311.200V558.500H1318A3 3 0 0 1 1321 561L1321.500 562.500A3 3 0 0 0 1322.500 564L1331.500 574.500A3 3 0 0 1 1332.500 577V589.500H1248.700Z" fill="#eef3fc"/><path d="M1248.700 576.100V547.500A8 8 0 0 1 1256.700 539.500H1303.200A8 8 0 0 1 1311.200 547.500V576.100Z" fill="#fff"/><path d="M1223.300 551.400H1256.300M1227.300 558.400H1260.100M1233 565.400H1255.800"/><circle cx="1263.900" cy="589.800" r="6.500" fill="#fff"/><circle cx="1317.900" cy="589.800" r="6.500" fill="#fff"/><path d="M1231 596.300H1347.300"/></g>
</svg>

</body>
</html>
